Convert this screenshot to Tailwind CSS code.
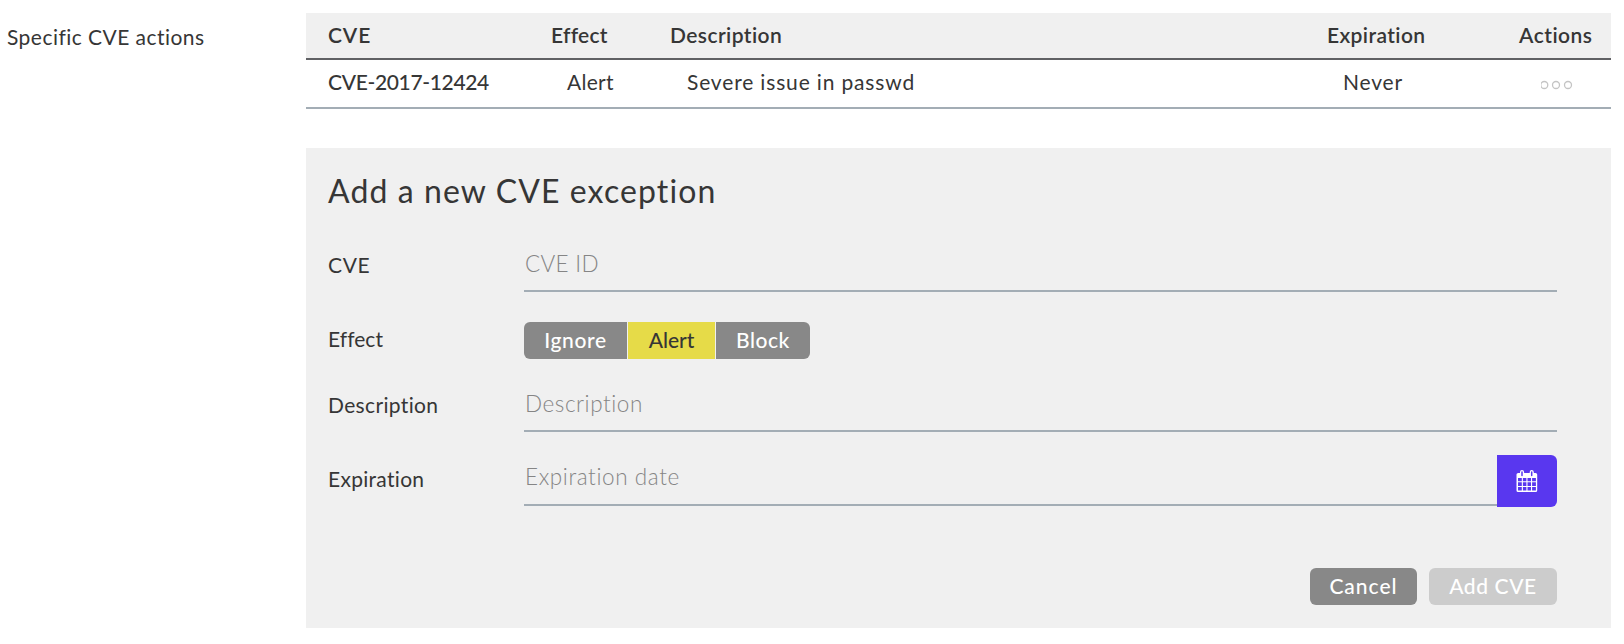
<!DOCTYPE html>
<html lang="en">
<head>
<meta charset="utf-8">
<title>CVE exceptions</title>
<script src="https://cdn.jsdelivr.net/npm/@tailwindcss/browser@4"></script>
</head>
<body class="bg-white">
<main class="flex h-[644px] w-[1624px] overflow-hidden pt-[13px] font-['Lato',sans-serif] text-[21px] leading-[26px] text-[#363636]">
  <div class="w-[306px] shrink-0 pt-[11px] pl-[7px] tracking-[0.46px]">Specific CVE actions</div>

  <div class="w-[1305px]">
    <div class="grid h-[47px] grid-cols-[223px_119px_657px_192px_1fr] items-center border-b-2 border-[#606164] bg-[#f0f0f0] pb-px pl-[22px] font-semibold">
      <div class="tracking-[0.9px]">CVE</div>
      <div class="tracking-[0.25px]">Effect</div>
      <div class="tracking-[0.42px]">Description</div>
      <div class="tracking-[0.4px]">Expiration</div>
      <div class="tracking-[0.5px]">Actions</div>
    </div>
    <div class="grid h-[49px] grid-cols-[239px_120px_656px_196px_1fr] items-center border-b-2 border-[#a3adb5] pb-[3px] pl-[22px]">
      <div class="font-medium tracking-[-0.34px]">CVE-2017-12424</div>
      <div class="tracking-[0.3px]">Alert</div>
      <div class="tracking-[0.84px]">Severe issue in passwd</div>
      <div class="tracking-[0.8px]">Never</div>
      <!-- row menu -->
      <svg class="mt-[6px] ml-[2px]" width="32" height="10" viewBox="0 0 32 10" fill="none" stroke="#c4c4c4" stroke-width="1.3">
        <circle cx="3.300" cy="5" r="3.500"/><circle cx="15" cy="5" r="3.500"/><circle cx="27" cy="5" r="3.500"/>
      </svg>
    </div>

    <section class="mt-[39px] h-[480px] bg-[#f0f0f0] pt-[24px] pr-[54px] pl-[22px]">
      <h2 class="text-[32px] leading-[38px] tracking-[1.1px]">Add a new CVE exception</h2>

      <div class="mt-[30px] flex h-[52px]">
        <div class="w-[196px] pt-[12px] tracking-[0.6px]">CVE</div>
        <div class="flex-1 border-b-2 border-[#a3adb5] pt-[10px] pl-[1px] text-[22.5px] leading-[28px] font-light tracking-[0.3px] text-[#858585]">CVE ID</div>
      </div>

      <div class="mt-[30px] flex h-[37px]">
        <div class="w-[196px] pt-[4px] tracking-[0.05px]">Effect</div>
        <div class="flex gap-px text-white">
          <div class="w-[103px] rounded-l-[6px] bg-[#888] pt-[5px] text-center font-medium tracking-[0.65px]">Ignore</div>
          <div class="w-[87px] bg-[#e6db48] pt-[5px] text-center font-medium tracking-[0px] text-[#363636]">Alert</div>
          <div class="w-[94px] rounded-r-[6px] bg-[#888] pt-[5px] text-center font-medium tracking-[0.5px]">Block</div>
        </div>
      </div>

      <div class="mt-[21px] flex h-[52px]">
        <div class="w-[196px] pt-[12px] tracking-[0.35px]">Description</div>
        <div class="flex-1 border-b-2 border-[#a3adb5] pt-[10px] pl-[1px] text-[22.5px] leading-[28px] font-light tracking-[0.56px] text-[#858585]">Description</div>
      </div>

      <div class="mt-[23px] flex h-[52px]">
        <div class="w-[196px] pt-[11px] tracking-[0.3px]">Expiration</div>
        <div class="mb-px flex-1 border-b-2 border-[#a3adb5] pt-[8px] pl-[1px] text-[22.5px] leading-[28px] font-light tracking-[0.6px] text-[#858585]">Expiration date</div>
        <div class="flex w-[60px] items-center justify-center rounded-r-[6px] bg-[#5937ef]">
          <svg class="-mt-px" width="22" height="24" viewBox="0 0 22 24" fill="none">
            <path fill="#fff" fill-rule="evenodd" d="M2.2 4H4V3Q4 1 6 1t2.100 2v1h5.600V3q0-2 2-2t2.100 2v1h1.800q1.600 0 1.600 1.600v15.900q0 1.600-1.600 1.600H2.100Q.5 23.100.5 21.500V5.600Q.5 4 2.200 4ZM2 9V12.200H5.800V9ZM6.900 9V12.200H10.400V9ZM11.500 9V12.200H15V9ZM16.100 9V12.200H19.900V9ZM2 13.300V17H5.800V13.300ZM6.900 13.300V17H10.400V13.300ZM11.500 13.300V17H15V13.300ZM16.100 13.300V17H19.900V13.300ZM2 18.100V21.600H5.800V18.100ZM6.900 18.100V21.600H10.400V18.100ZM11.500 18.100V21.600H15V18.100ZM16.100 18.100V21.600H19.900V18.100Z"/>
            <path stroke="#5937ef" stroke-width="1.500" stroke-linecap="round" d="M6 3v3.500M15.700 3v3.500"/>
          </svg>
        </div>
      </div>

      <div class="mt-[61px] flex justify-end gap-3 text-white">
        <div class="h-[37px] w-[107px] rounded-[6px] bg-[#888] pt-[5px] text-center font-medium tracking-[1px]">Cancel</div>
        <div class="h-[37px] w-[128px] rounded-[6px] bg-[#ccc] pt-[5px] text-center font-medium tracking-[0.6px]">Add CVE</div>
      </div>
    </section>
  </div>
</main>
</body>
</html>
